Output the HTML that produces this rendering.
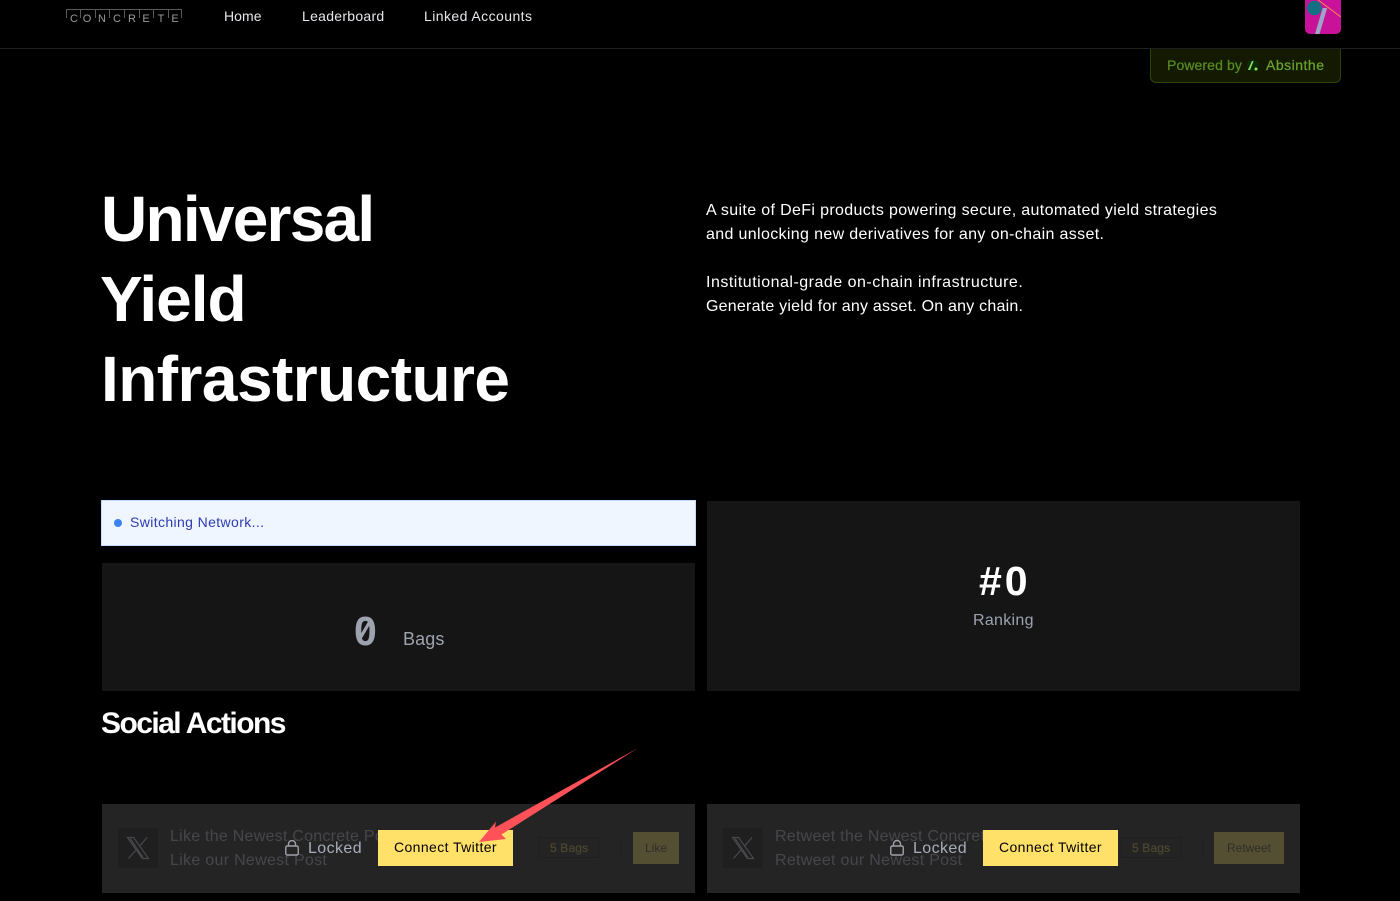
<!DOCTYPE html>
<html><head><meta charset="utf-8"><style>
html,body{margin:0;padding:0;background:#000}
body{width:1400px;height:901px;overflow:hidden;position:relative;font-family:"Liberation Sans",sans-serif}
.a{position:absolute;white-space:nowrap}
.b{position:absolute}
.hl{font-size:64px;font-weight:700;color:#fff;line-height:80px;left:101px}
.nav{font-size:14px;color:#e5e7eb;top:8px;line-height:17px}
.p{font-size:16px;color:#fff;left:706px;line-height:24px}
.lg{font-size:11px;color:#9a9a9a;top:13px;line-height:12px;width:14px;text-align:center}
.tk{position:absolute;top:9px;width:1px;height:9px;background:#5a5a5a}
.card{background:#151515}
.soc{background:#242425}
.t1{font-size:16px;color:#46474b;line-height:24px}
.lock{font-size:16px;color:#a6adbb;line-height:20px;letter-spacing:.4px}
.btn{background:#ffe169;color:#000;font-size:14px;text-align:center;line-height:34px;width:135px;height:36px;letter-spacing:.4px}
.bg{position:absolute;font-size:12px;line-height:16px;color:#4d482e;letter-spacing:.15px;-webkit-text-stroke:.2px #4d482e;white-space:nowrap}
.bx{position:absolute;box-sizing:border-box;border:1px solid #1f1f1f;height:21px;top:837px;width:60px}
.dv{position:absolute;top:838px;width:1px;height:20px;background:#1f1f1f}
.act{position:absolute;top:832px;height:32px;background:#544e33;color:#2f2f29;font-size:12px;line-height:32px;text-align:center}
</style></head><body>
<div class="b" style="left:0;top:48px;width:1400px;height:1px;background:#1f1f1f"></div>
<div class="b" style="left:66px;top:9px;width:116px;height:1px;background:#5a5a5a"></div>
<i class="tk" style="left:66px"></i><i class="tk" style="left:80px"></i><i class="tk" style="left:95px"></i><i class="tk" style="left:109px"></i><i class="tk" style="left:124px"></i><i class="tk" style="left:139px"></i><i class="tk" style="left:153px"></i><i class="tk" style="left:168px"></i><i class="tk" style="left:181px"></i>
<span class="a lg" style="left:67px">C</span><span class="a lg" style="left:80px">O</span><span class="a lg" style="left:95px">N</span><span class="a lg" style="left:110px">C</span><span class="a lg" style="left:125px">R</span><span class="a lg" style="left:139px">E</span><span class="a lg" style="left:154px">T</span><span class="a lg" style="left:168px">E</span>
<span class="a nav" style="left:224px;letter-spacing:.05px">Home</span>
<span class="a nav" style="left:302px;letter-spacing:.28px">Leaderboard</span>
<span class="a nav" style="left:424px;letter-spacing:.43px">Linked Accounts</span>
<svg class="b" style="left:1305px;top:0" width="36" height="34" viewBox="0 0 36 34"><defs><clipPath id="c"><path d="M0 0H36V29a5 5 0 0 1-5 5H5a5 5 0 0 1-5-5Z"/></clipPath></defs><g clip-path="url(#c)"><rect width="36" height="34" fill="#c8129a"/><path d="M17.7 8h4.5L14.5 34H10Z" fill="#9ea6c8"/><circle cx="9.3" cy="8" r="7.3" fill="#147083"/><path d="M13 0L36 17" stroke="#f98b4a" stroke-width="1"/></g></svg>
<div class="b" style="left:1150px;top:49px;width:191px;height:34px;box-sizing:border-box;background:#141a02;border:1px solid #2c4408;border-top:0;border-radius:0 0 6px 6px"></div>
<span class="a" style="left:1167px;top:57px;font-size:14px;line-height:17px;color:#568a22;letter-spacing:.1px;-webkit-text-stroke:.25px #568a22">Powered by</span>
<svg class="b" style="left:1246px;top:59px" width="14" height="13" viewBox="0 0 14 13"><circle cx="7" cy="6.5" r="6" fill="#0c2c06"/><path d="M2 11L6 2h1.6L4 11Z" fill="#8fe26a"/><circle cx="10" cy="10" r="1.5" fill="#8fe26a"/></svg>
<span class="a" style="left:1266px;top:57px;font-size:14px;line-height:17px;color:#6aa32c;letter-spacing:.5px;-webkit-text-stroke:.25px #6aa32c">Absinthe</span>
<div class="a hl" style="top:179px;letter-spacing:-1.75px">Universal</div>
<div class="a hl" style="top:259px;left:100px;letter-spacing:-1px">Yield</div>
<div class="a hl" style="top:339px;letter-spacing:-.55px">Infrastructure</div>
<div class="a p" style="top:199px;letter-spacing:.35px">A suite of DeFi products powering secure, automated yield strategies</div>
<div class="a p" style="top:223px;letter-spacing:.35px">and unlocking new derivatives for any on-chain asset.</div>
<div class="a p" style="top:271px;letter-spacing:.5px">Institutional-grade on-chain infrastructure.</div>
<div class="a p" style="top:295px;letter-spacing:.22px">Generate yield for any asset. On any chain.</div>
<div class="b" style="left:101px;top:500px;width:595px;height:46px;box-sizing:border-box;background:#eff6ff;border:1px solid #bfdbfe"></div>
<div class="b" style="left:114px;top:519px;width:8px;height:8px;border-radius:50%;background:#3b82f6"></div>
<span class="a" style="left:130px;top:514px;font-size:14px;line-height:17px;color:#2f3bb0;letter-spacing:.38px">Switching Network...</span>
<div class="b card" style="left:102px;top:563px;width:593px;height:128px"></div>
<div class="b card" style="left:707px;top:501px;width:593px;height:190px"></div>
<span class="a" style="left:354px;top:609px;font-size:41px;line-height:44px;font-weight:700;color:#9ca3af">0</span>
<svg class="b" style="left:350px;top:610px" width="30" height="40" viewBox="0 0 30 40"><path d="M20.5 10.5L10 28.5" stroke="#9ca3af" stroke-width="3.2"/></svg>
<span class="a" style="left:403px;top:628px;font-size:18px;line-height:22px;color:#9ca3af;letter-spacing:.1px">Bags</span>
<span class="a" style="left:979px;top:559px;font-size:41px;line-height:44px;font-weight:700;color:#fff;letter-spacing:3px">#0</span>
<span class="a" style="left:973px;top:611px;font-size:16px;line-height:20px;color:#9ca3af;letter-spacing:.3px">Ranking</span>
<div class="a" style="left:101px;top:705px;font-size:30px;line-height:38px;font-weight:700;color:#fff;letter-spacing:-1.55px">Social Actions</div>
<div class="b soc" style="left:102px;top:804px;width:593px;height:89px"></div>
<div class="b soc" style="left:707px;top:804px;width:593px;height:89px"></div>
<!-- left -->
<div class="b" style="left:118px;top:828px;width:40px;height:40px;background:#1f1f20"></div>
<svg class="b" style="left:126px;top:836px" width="24" height="24" viewBox="0 0 24 24"><path d="M1.5 1.5H7.6L22.5 22.5H16.4ZM21 1.5L13.2 10.6M10.6 13.5L2.4 22.5M4.2 2.6L17 21.4" fill="none" stroke="#47484c" stroke-width="1.2"/></svg>
<span class="a t1" style="left:170px;top:825px;letter-spacing:.25px">Like the Newest Concrete Post</span>
<span class="a t1" style="left:170px;top:849px;letter-spacing:.3px">Like our Newest Post</span>
<svg class="b" style="left:285px;top:840px" width="15" height="16" viewBox="0 0 15 16"><rect x=".75" y="6" width="12.5" height="9" rx="1.5" fill="none" stroke="#a0a0a8" stroke-width="1.4"/><path d="M3.5 6V4a3.5 3.5 0 0 1 7 0V6" fill="none" stroke="#a0a0a8" stroke-width="1.4"/></svg>
<span class="a lock" style="left:308px;top:839px">Locked</span>
<div class="b btn" style="left:378px;top:830px">Connect Twitter</div>
<div class="bx" style="left:539px"></div>
<span class="bg" style="left:550px;top:840px">5 Bags</span>
<div class="dv" style="left:620px"></div>
<div class="act" style="left:633px;width:46px">Like</div>
<!-- right -->
<div class="b" style="left:723px;top:828px;width:40px;height:40px;background:#1f1f20"></div>
<svg class="b" style="left:731px;top:836px" width="24" height="24" viewBox="0 0 24 24"><path d="M1.5 1.5H7.6L22.5 22.5H16.4ZM21 1.5L13.2 10.6M10.6 13.5L2.4 22.5M4.2 2.6L17 21.4" fill="none" stroke="#47484c" stroke-width="1.2"/></svg>
<span class="a t1" style="left:775px;top:825px;letter-spacing:.25px">Retweet the Newest Concrete</span>
<span class="a t1" style="left:775px;top:849px;letter-spacing:.3px">Retweet our Newest Post</span>
<svg class="b" style="left:890px;top:840px" width="15" height="16" viewBox="0 0 15 16"><rect x=".75" y="6" width="12.5" height="9" rx="1.5" fill="none" stroke="#a0a0a8" stroke-width="1.4"/><path d="M3.5 6V4a3.5 3.5 0 0 1 7 0V6" fill="none" stroke="#a0a0a8" stroke-width="1.4"/></svg>
<span class="a lock" style="left:913px;top:839px">Locked</span>
<div class="b btn" style="left:983px;top:830px">Connect Twitter</div>
<div class="bx" style="left:1121px"></div>
<span class="bg" style="left:1132px;top:840px">5 Bags</span>
<div class="dv" style="left:1202px"></div>
<div class="act" style="left:1214px;width:70px">Retweet</div>
<svg class="b" style="left:0;top:0" width="1400" height="901" viewBox="0 0 1400 901"><path d="M638 748L495 827.5L496 821.5L479 842L506 839L501.5 834.5Z" fill="#ff5157"/></svg>
</body></html>
